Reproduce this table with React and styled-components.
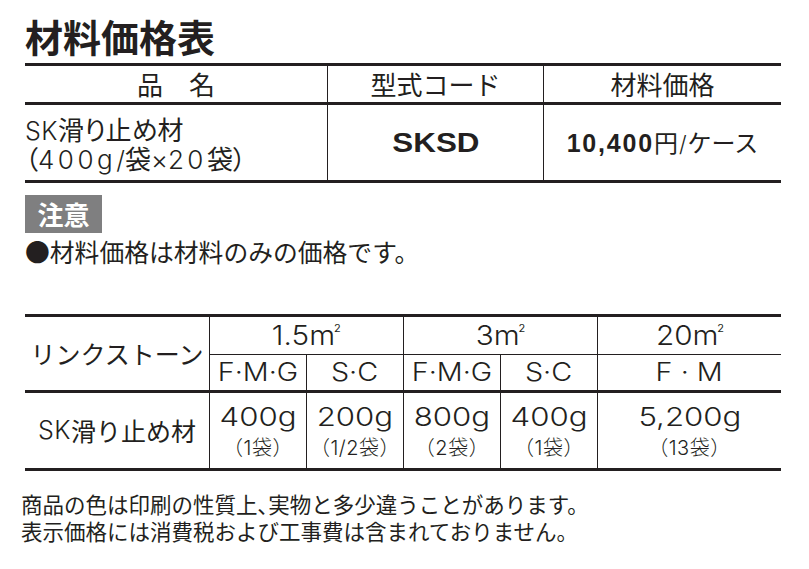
import React from "react";
import styled, { createGlobalStyle } from "styled-components";

const INK = "#231f20";
const CJK = `"Noto Sans CJK JP", sans-serif`;
const LAT = `Inter, "Noto Sans CJK JP", sans-serif`;
const HEL = `"Liberation Sans", "Noto Sans CJK JP", sans-serif`;
const THICK = `3px solid ${INK}`;
const THIN = `1.5px solid ${INK}`;

const Global = createGlobalStyle`
  html, body { margin: 0; padding: 0; background: #ffffff; }
  body { font-family: ${LAT}; color: ${INK}; }
`;

const Page = styled.div`
  width: 809px;
  height: 569px;
  box-sizing: border-box;
  padding: 0 28px 0 25px;
  display: flex;
  flex-direction: column;
  overflow: hidden;
`;

const Title = styled.h1`
  margin: 0 0 5px;
  padding-top: 14px;
  font: 700 38px/44px ${CJK};
  color: ${INK};
`;

/* ---------- price table ---------- */
const PriceGrid = styled.div`
  display: grid;
  grid-template-columns: 302px 216px 238px;
  border-top: ${THICK};
  border-bottom: ${THICK};
`;

const HeadCell = styled.div`
  height: 39px;
  box-sizing: border-box;
  border-bottom: ${THICK};
  border-left: ${(p) => (p.$first ? "none" : THIN)};
  display: flex;
  align-items: center;
  justify-content: center;
  font: 400 26px/1 ${CJK};
`;

const BodyCell = styled.div`
  height: 75px;
  box-sizing: border-box;
  border-left: ${(p) => (p.$first ? "none" : THIN)};
  display: flex;
  flex-direction: column;
  justify-content: center;
  align-items: ${(p) => (p.$left ? "flex-start" : "center")};
`;

const NameLine = styled.div`
  height: 29px;
  font: 400 26px/29px ${CJK};
  white-space: nowrap;
  font-feature-settings: "palt";
`;

const Lat = styled.span`
  font-family: Inter, sans-serif;
  font-weight: 300;
  font-size: ${(p) => p.$size || 24}px;
  letter-spacing: ${(p) => p.$ls || 0}px;
`;

const Wide = styled.span`
  display: inline-block;
  transform: scaleX(${(p) => p.$x || 1.15});
`;

const Code = styled.div`
  font: 700 28px/1 ${HEL};
  transform: scaleX(1.12);
`;

const Price = styled.div`
  display: flex;
  align-items: baseline;
  white-space: nowrap;
`;

const PriceNum = styled.span`
  font: 700 25px/1 ${HEL};
  letter-spacing: 1.8px;
`;

const PriceUnit = styled.span`
  font: 400 24px/1 ${CJK};
`;

const PriceSlash = styled.span`
  font: 300 22px/1 Inter, sans-serif;
  margin: 0 1px;
`;

/* ---------- notice ---------- */
const NoticeTag = styled.div`
  margin-top: 12px;
  width: 77px;
  height: 38px;
  background: #7f7f80;
  color: #ffffff;
  font: 700 26px/38px ${CJK};
  text-align: center;
`;

const NoteLine = styled.p`
  margin: 3px 0 0;
  font: 400 24.8px/30px ${CJK};
  white-space: nowrap;
`;

/* ---------- usage chart ---------- */
const ChartGrid = styled.div`
  margin-top: 48px;
  display: grid;
  grid-template-columns: 184px 97px 97px 97px 97px 184px;
  grid-template-rows: 38px 38px 75px;
  border-top: ${THICK};
  border-bottom: ${THICK};
`;

const LabelCell = styled.div`
  grid-row: ${(p) => (p.$tall ? "span 2" : "auto")};
  box-sizing: border-box;
  border-bottom: ${(p) => (p.$tall ? THICK : "none")};
  display: flex;
  align-items: center;
  justify-content: center;
  font: 400 25px/1 ${CJK};
  white-space: nowrap;
`;

const AreaCell = styled.div`
  grid-column: span ${(p) => p.$span || 1};
  box-sizing: border-box;
  border-left: ${THIN};
  border-bottom: ${THIN};
  display: flex;
  align-items: center;
  justify-content: center;
  font: 300 27px/1 ${LAT};
  white-space: nowrap;
`;

const Sup = styled.span`
  font-size: 10px;
  font-weight: 400;
  vertical-align: 13px;
  margin-left: -1px;
`;

const GradeCell = styled.div`
  box-sizing: border-box;
  border-left: ${THIN};
  border-bottom: ${THICK};
  display: flex;
  align-items: center;
  justify-content: center;
  font: 300 25px/1 ${LAT};
  white-space: nowrap;
`;

const AmountCell = styled.div`
  box-sizing: border-box;
  border-left: ${THIN};
  display: flex;
  flex-direction: column;
  align-items: center;
  justify-content: center;
  white-space: nowrap;
`;

const Amount = styled.div`
  height: 34px;
  font: 300 26px/34px ${LAT};
  transform: scaleX(1.2);
`;

const Bags = styled.div`
  height: 28px;
  font: 300 20px/28px ${LAT};
  letter-spacing: 0.5px;
`;

/* ---------- footer ---------- */
const Footer = styled.div`
  margin: 19px 0 0 -4px;
  display: flex;
  flex-direction: column;
`;

const FootLine = styled.div`
  height: 27px;
  font: 400 21.5px/27px ${CJK};
  white-space: nowrap;
`;

const Comma = styled.span`
  font-feature-settings: "palt";
`;

const areas = [
  { label: "1.5", span: 2 },
  { label: "3", span: 2 },
  { label: "20", span: 1 },
];

const grades = ["F·M·G", "S·C", "F·M·G", "S·C", "F · M"];

const amounts = [
  { g: "400g", bags: "（1袋）" },
  { g: "200g", bags: "（1/2袋）" },
  { g: "800g", bags: "（2袋）" },
  { g: "400g", bags: "（1袋）" },
  { g: "5,200g", bags: "（13袋）" },
];

export default function App() {
  return (
    <>
      <Global />
      <Page>
        <Title>材料価格表</Title>

        <PriceGrid>
          <HeadCell $first>品　名</HeadCell>
          <HeadCell>型式コード</HeadCell>
          <HeadCell>材料価格</HeadCell>

          <BodyCell $first $left>
            <NameLine>
              <Lat $size={25} $ls={0.5}>SK</Lat>滑り止め材
            </NameLine>
            <NameLine>
              （<Lat $size={26} $ls={3.5}>400g</Lat>
              <Lat $size={25}>/</Lat>袋<Lat $size={26}>×</Lat>
              <Lat $size={26} $ls={3.5}>20</Lat>袋）
            </NameLine>
          </BodyCell>
          <BodyCell>
            <Code>SKSD</Code>
          </BodyCell>
          <BodyCell>
            <Price>
              <PriceNum>10,400</PriceNum>
              <PriceUnit>円</PriceUnit>
              <PriceSlash>/</PriceSlash>
              <PriceUnit>ケース</PriceUnit>
            </Price>
          </BodyCell>
        </PriceGrid>

        <NoticeTag>注意</NoticeTag>
        <NoteLine>●材料価格は材料のみの価格です。</NoteLine>

        <ChartGrid>
          <LabelCell $tall>リンクストーン</LabelCell>
          {areas.map((a) => (
            <AreaCell key={a.label} $span={a.span}>
              <Wide $x={1.1}>
                {a.label}m<Sup>2</Sup>
              </Wide>
            </AreaCell>
          ))}
          {grades.map((g, i) => (
            <GradeCell key={i}>
              <Wide $x={1.15}>{g}</Wide>
            </GradeCell>
          ))}
          <LabelCell>
            <Lat $size={25} $ls={0.5}>SK</Lat>滑り止め材
          </LabelCell>
          {amounts.map((a, i) => (
            <AmountCell key={i}>
              <Amount>{a.g}</Amount>
              <Bags>{a.bags}</Bags>
            </AmountCell>
          ))}
        </ChartGrid>

        <Footer>
          <FootLine>
            商品の色は印刷の性質上<Comma>、</Comma>実物と多少違うことがあります。
          </FootLine>
          <FootLine>表示価格には消費税および工事費は含まれておりません。</FootLine>
        </Footer>
      </Page>
    </>
  );
}
